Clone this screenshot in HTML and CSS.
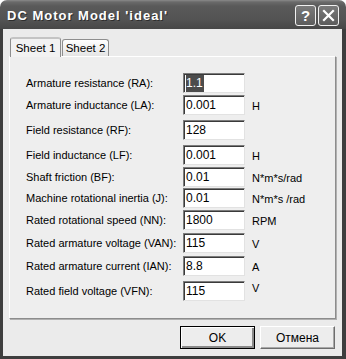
FILE: index.html
```html
<!DOCTYPE html>
<html lang="en">
<head>
  <meta charset="UTF-8" />
  <title>DC Motor Model 'ideal'</title>
  <link rel="stylesheet" href="styles.css">
</head>
<body>

  <div class="window">
    <!-- Barra de título -->
    <div class="titlebar">
      <span class="title">DC Motor Model 'ideal'</span>
      <div class="caption-buttons">
        <span class="cap-btn">?</span>
        <span class="cap-btn">
          <svg width="13" height="13" viewBox="0 0 13 13">
            <path d="M2 2 L11 11 M11 2 L2 11" stroke="#fff" stroke-width="2.2" stroke-linecap="square" />
          </svg>
        </span>
      </div>
    </div>

    <div class="client">
      <div class="tabs">
        <span class="tab active">Sheet 1</span>
        <span class="tab">Sheet 2</span>
      </div>

      <div class="sheet">
        <div class="row">
          <span class="label">Armature resistance (RA):</span>
          <div class="field"><span class="sel">1.1</span></div>
          <span class="unit"></span>
        </div>
        <div class="row">
          <span class="label">Armature inductance (LA):</span>
          <div class="field">0.001</div>
          <span class="unit">H</span>
        </div>
        <div class="row loose">
          <span class="label">Field resistance (RF):</span>
          <div class="field">128</div>
          <span class="unit"></span>
        </div>
        <div class="row loose">
          <span class="label">Field inductance (LF):</span>
          <div class="field">0.001</div>
          <span class="unit">H</span>
        </div>
        <div class="row">
          <span class="label">Shaft friction (BF):</span>
          <div class="field">0.01</div>
          <span class="unit">N*m*s/rad</span>
        </div>
        <div class="row tight">
          <span class="label">Machine rotational inertia (J):</span>
          <div class="field">0.01</div>
          <span class="unit">N*m*s /rad</span>
        </div>
        <div class="row">
          <span class="label">Rated rotational speed (NN):</span>
          <div class="field">1800</div>
          <span class="unit">RPM</span>
        </div>
        <div class="row mid">
          <span class="label">Rated armature voltage (VAN):</span>
          <div class="field">115</div>
          <span class="unit">V</span>
        </div>
        <div class="row mid">
          <span class="label">Rated armature current (IAN):</span>
          <div class="field">8.8</div>
          <span class="unit">A</span>
        </div>
        <div class="row loose">
          <span class="label">Rated field voltage (VFN):</span>
          <div class="field">115</div>
          <span class="unit up">V</span>
        </div>
      </div>

      <div class="actions">
        <button class="btn default">OK</button>
        <button class="btn">Отмена</button>
      </div>
    </div>
  </div>

</body>
</html>
```

FILE: styles.css
```css
body {
  margin: 0;
  background-color: #ffffff;
  font-family: 'Liberation Sans', Arial, sans-serif;
  font-size: 11px;
  color: #000;
}

.window {
  width: 346px;
  height: 359px;
  display: flex;
  flex-direction: column;
}

.titlebar {
  height: 29px;
  box-sizing: border-box;
  padding: 0 7px 0 7px;
  display: flex;
  align-items: center;
  justify-content: space-between;
  border-radius: 7px 7px 0 0;
  background: linear-gradient(to bottom, #8a8a8a 0px, #6a6a6a 2px, #5a5a5a 6px, #535353 20px, #474747 29px);
}

.title {
  color: #fff;
  font-weight: bold;
  font-size: 13px;
  letter-spacing: 1px;
  text-shadow: 1px 1px 0 #2e2e2e;
  margin-top: 1px;
}

.caption-buttons {
  display: flex;
  gap: 2px;
  margin-top: 1px;
}

.cap-btn {
  width: 21px;
  height: 21px;
  box-sizing: border-box;
  border: 1px solid #f0f0f0;
  border-radius: 3px;
  background: linear-gradient(to bottom, #7a7a7a, #5c5c5c);
  color: #fff;
  font-weight: bold;
  font-size: 15px;
  display: flex;
  align-items: center;
  justify-content: center;
}

.client {
  flex: 1;
  background-color: #ebebeb;
  border-left: 3px solid #3e3e3e;
  border-right: 4px solid #3e3e3e;
  border-bottom: 3px solid #3e3e3e;
  padding: 8px 6px 0 6px;
}

.tabs {
  display: flex;
  align-items: flex-end;
  height: 19px;
  padding-left: 1px;
  position: relative;
  z-index: 1;
}

.tab {
  height: 17px;
  width: 47px;
  box-sizing: border-box;
  border: 1px solid #8e8e8e;
  border-bottom: none;
  border-radius: 3px 3px 0 0;
  background: linear-gradient(to bottom, #ffffff, #e4e4e4);
  display: flex;
  align-items: center;
  justify-content: center;
  margin-left: 1px;
  font-size: 11.5px;
}

.tab.active {
  height: 20px;
  width: 51px;
  margin-left: 0;
  margin-bottom: -1px;
  background: #f2f2f2;
  border-top: 2px solid #c4c4c4;
}

.sheet {
  width: 327px;
  height: 263px;
  box-sizing: border-box;
  background-color: #eeeeee;
  border: 1px solid #8c8c8c;
  border-top-color: #ffffff;
  border-left-color: #ffffff;
  box-shadow: 1px 1px 0 #b0b0b0;
  padding: 16px 0 0 16px;
  display: flex;
  flex-direction: column;
}

.row {
  display: grid;
  grid-template-columns: 157px 62px auto;
  align-items: center;
  height: 20px;
}

.row + .row {
  margin-top: 2px;
}

.row.tight {
  margin-top: 1px;
}

.row.mid {
  margin-top: 3px;
}

.row.loose {
  margin-top: 5px;
}

.field {
  height: 20px;
  box-sizing: border-box;
  background-color: #fff;
  border: 1px solid #e2e2e2;
  border-top-color: #7c7c7c;
  border-left-color: #7c7c7c;
  box-shadow: inset 1px 1px 0 #3a3a3a;
  padding: 0 0 0 2px;
  line-height: 18px;
  font-size: 12px;
}

.sel {
  background-color: #4c4c4c;
  color: #fff;
  padding: 1px 1px 2px 0;
}

.unit {
  margin-left: 7px;
  margin-top: 2px;
}

.unit.up {
  margin-top: -6px;
}

.actions {
  display: flex;
  justify-content: flex-end;
  gap: 5px;
  margin-top: 7px;
  padding-right: 1px;
}

.btn {
  width: 75px;
  height: 23px;
  box-sizing: border-box;
  font-family: 'Liberation Sans', Arial, sans-serif;
  font-size: 12px;
  background-color: #ededed;
  border: 1px solid #6e6e6e;
  border-top-color: #ffffff;
  border-left-color: #ffffff;
  box-shadow: inset -1px -1px 0 #a8a8a8;
  padding: 0;
}

.btn.default {
  border: 1px solid #000;
  box-shadow: inset 1px 1px 0 #fff, inset -2px -2px 0 #8a8a8a;
}
```
